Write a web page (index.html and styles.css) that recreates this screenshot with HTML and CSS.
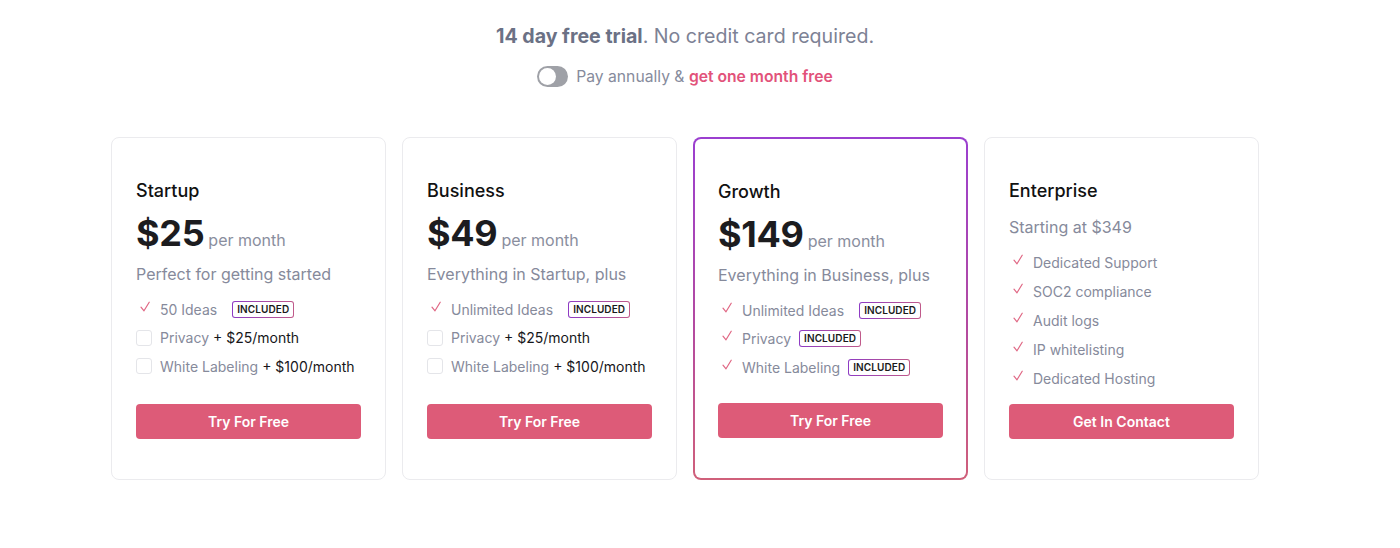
FILE: index.html
```html
<!DOCTYPE html>
<html>
<head>
<meta charset="utf-8">
<link rel="stylesheet" href="styles.css">
</head>
<body>
<main class="page">
  <header class="intro">
    <p class="trial"><strong>14 day free trial</strong>. No credit card required.</p>
    <div class="billing">
      <span class="toggle"><span class="knob"></span></span>
      <span>Pay annually &amp; <span class="accent">get one month free</span></span>
    </div>
  </header>

  <section class="plans">
    <article class="card">
      <h2 class="name">Startup</h2>
      <div class="price"><span class="amount">$25</span><span class="per">per month</span></div>
      <p class="desc">Perfect for getting started</p>
      <ul class="features">
        <li><svg class="check" viewBox="0 0 10 11"><path d="M1 6.2l3 3.6 5.2-8.6"/></svg><span class="feat">50 Ideas</span><span class="badge">INCLUDED</span></li>
        <li><span class="box"></span><span class="feat">Privacy</span><span class="addon">+ $25/month</span></li>
        <li><span class="box"></span><span class="feat">White Labeling</span><span class="addon">+ $100/month</span></li>
      </ul>
      <button class="cta">Try For Free</button>
    </article>

    <article class="card">
      <h2 class="name">Business</h2>
      <div class="price"><span class="amount">$49</span><span class="per">per month</span></div>
      <p class="desc">Everything in Startup, plus</p>
      <ul class="features">
        <li><svg class="check" viewBox="0 0 10 11"><path d="M1 6.2l3 3.6 5.2-8.6"/></svg><span class="feat">Unlimited Ideas</span><span class="badge">INCLUDED</span></li>
        <li><span class="box"></span><span class="feat">Privacy</span><span class="addon">+ $25/month</span></li>
        <li><span class="box"></span><span class="feat">White Labeling</span><span class="addon">+ $100/month</span></li>
      </ul>
      <button class="cta">Try For Free</button>
    </article>

    <article class="card featured">
      <h2 class="name">Growth</h2>
      <div class="price"><span class="amount">$149</span><span class="per">per month</span></div>
      <p class="desc">Everything in Business, plus</p>
      <ul class="features">
        <li><svg class="check" viewBox="0 0 10 11"><path d="M1 6.2l3 3.6 5.2-8.6"/></svg><span class="feat">Unlimited Ideas</span><span class="badge">INCLUDED</span></li>
        <li><svg class="check" viewBox="0 0 10 11"><path d="M1 6.2l3 3.6 5.2-8.6"/></svg><span class="feat">Privacy</span><span class="badge near">INCLUDED</span></li>
        <li><svg class="check" viewBox="0 0 10 11"><path d="M1 6.2l3 3.6 5.2-8.6"/></svg><span class="feat">White Labeling</span><span class="badge near">INCLUDED</span></li>
      </ul>
      <button class="cta">Try For Free</button>
    </article>

    <article class="card">
      <h2 class="name">Enterprise</h2>
      <p class="start">Starting at $349</p>
      <ul class="features list">
        <li><svg class="check" viewBox="0 0 10 11"><path d="M1 6.2l3 3.6 5.2-8.6"/></svg><span class="feat">Dedicated Support</span></li>
        <li><svg class="check" viewBox="0 0 10 11"><path d="M1 6.2l3 3.6 5.2-8.6"/></svg><span class="feat">SOC2 compliance</span></li>
        <li><svg class="check" viewBox="0 0 10 11"><path d="M1 6.2l3 3.6 5.2-8.6"/></svg><span class="feat">Audit logs</span></li>
        <li><svg class="check" viewBox="0 0 10 11"><path d="M1 6.2l3 3.6 5.2-8.6"/></svg><span class="feat">IP whitelisting</span></li>
        <li><svg class="check" viewBox="0 0 10 11"><path d="M1 6.2l3 3.6 5.2-8.6"/></svg><span class="feat">Dedicated Hosting</span></li>
      </ul>
      <button class="cta">Get In Contact</button>
    </article>
  </section>
</main>
</body>
</html>
```

FILE: styles.css
```css
* { box-sizing: border-box; }
html, body { margin: 0; padding: 0; background: #fff; }
body { font-family: Inter, "Noto Sans", sans-serif; color: #111827; }

.page { width: 1370px; padding-top: 23px; }

.intro { display: flex; flex-direction: column; align-items: center; }
.trial { margin: 0; font-size: 19.6px; line-height: 26px; color: #7d8295; }
.trial strong { font-weight: 700; color: #6b7185; }

.billing { display: flex; align-items: center; gap: 8px; margin-top: 17px; font-size: 15.7px; line-height: 20px; color: #868b9c; }
.accent { color: #e2527a; font-weight: 600; }
.toggle { width: 31px; height: 21px; border-radius: 11px; background: #9fa1a7; display: flex; align-items: center; padding: 2px; }
.knob { width: 17px; height: 17px; border-radius: 50%; background: #fff; }

.plans { display: flex; justify-content: center; gap: 16px; margin-top: 50px; }

.card { width: 275px; height: 343px; border: 1px solid #ebebee; border-radius: 8px; padding: 42px 24px 40px; display: flex; flex-direction: column; background: #fff; }
.card.featured { border: 2px solid transparent; padding: 42px 23px 40px; background: linear-gradient(#fff, #fff) padding-box, linear-gradient(180deg, #9b3fd0 0%, #b34aa0 55%, #d0607a 100%) border-box; }

.name { margin: 0; font-size: 18px; line-height: 22px; font-weight: 500; color: #111; }
.price { display: flex; align-items: baseline; margin-top: 4px; }
.amount { font-size: 36px; line-height: 54px; font-weight: 700; color: #1c1c1f; letter-spacing: -0.3px; }
.per { font-size: 16px; color: #8a8e9e; margin-left: 4px; }
.desc { margin: 3px 0 0; font-size: 16px; line-height: 22px; color: #868a9b; }
.start { margin: 14px 0 0; font-size: 16px; line-height: 22px; color: #868a9b; }

.features { list-style: none; margin: 14px 0 0; padding: 0; display: flex; flex-direction: column; gap: 8.5px; }
.features.list { margin-top: 14px; gap: 9px; }
.features li { display: flex; align-items: center; height: 20px; font-size: 14px; color: #858a9b; }
.check { width: 10px; height: 11px; margin: -6px 10px 0 4px; fill: none; stroke: #e06784; stroke-width: 1.2; stroke-linecap: round; stroke-linejoin: round; flex: none; }
.box { width: 16px; height: 16px; border: 1px solid #e4e5e9; border-radius: 3px; margin-right: 8px; flex: none; }
.feat { color: #868a9b; }
.addon { color: #16161a; margin-left: 4px; }
.badge { margin-left: 15px; font-size: 10px; line-height: 13px; font-weight: 600; color: #1a1a1a; padding: 1px 4px; border: 1px solid transparent; border-radius: 3px; background: linear-gradient(#fff, #fff) padding-box, linear-gradient(90deg, #8e3bc4, #c05a8a) border-box; letter-spacing: 0.1px; }
.badge.near { margin-left: 8px; }

.cta { margin-top: auto; height: 35px; width: 100%; border: none; border-radius: 4px; background: #dd5b78; color: #fff; font-family: Inter, "Noto Sans", sans-serif; font-size: 14px; font-weight: 600; }
```
